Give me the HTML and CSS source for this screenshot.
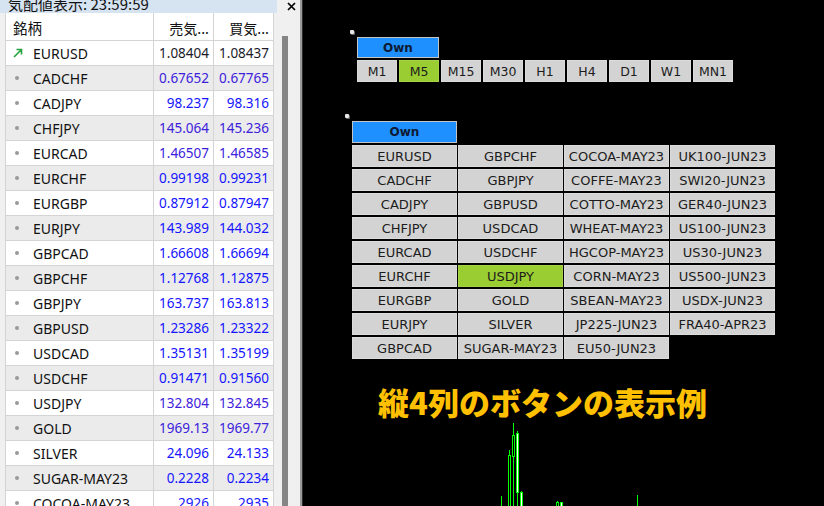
FILE: index.html
```html
<!DOCTYPE html>
<html lang="ja">
<head>
<meta charset="utf-8">
<link rel="stylesheet" href="styles.css">
</head>
<body>
<div class="screen">
  <div class="mw">
    <div class="mw-title">
      <div class="mw-caption">気配値表示: 23:59:59</div>
      <div class="mw-close"><svg width="9" height="9" viewBox="0 0 9 9"><path d="M1 1 L8 8 M8 1 L1 8" stroke="#000" stroke-width="1.7"/></svg></div>
    </div>
    <div class="mw-body">
      <div class="mw-table">
        <div class="row head"><div class="c name hname">銘柄</div><div class="c num hnum">売気...</div><div class="c num hnum">買気...</div></div>
        <div class="row sym"><div class="c name"><svg class="arrow" width="10" height="10" viewBox="0 0 10 10"><path d="M1 9 L8.3 1.7 M3.5 1.5 H8.5 V6.5" stroke="#23a33a" stroke-width="1.6" fill="none"/></svg>EURUSD</div><div class="c num dk">1.08404</div><div class="c num dk">1.08437</div></div>
        <div class="row sym"><div class="c name"><i class="dot"></i>CADCHF</div><div class="c num pu">0.67652</div><div class="c num pu">0.67765</div></div>
        <div class="row sym"><div class="c name"><i class="dot"></i>CADJPY</div><div class="c num bl">98.237</div><div class="c num bl">98.316</div></div>
        <div class="row sym"><div class="c name"><i class="dot"></i>CHFJPY</div><div class="c num pu">145.064</div><div class="c num pu">145.236</div></div>
        <div class="row sym"><div class="c name"><i class="dot"></i>EURCAD</div><div class="c num pu">1.46507</div><div class="c num pu">1.46585</div></div>
        <div class="row sym"><div class="c name"><i class="dot"></i>EURCHF</div><div class="c num bl">0.99198</div><div class="c num bl">0.99231</div></div>
        <div class="row sym"><div class="c name"><i class="dot"></i>EURGBP</div><div class="c num bl">0.87912</div><div class="c num bl">0.87947</div></div>
        <div class="row sym"><div class="c name"><i class="dot"></i>EURJPY</div><div class="c num bl">143.989</div><div class="c num bl">144.032</div></div>
        <div class="row sym"><div class="c name"><i class="dot"></i>GBPCAD</div><div class="c num bl">1.66608</div><div class="c num bl">1.66694</div></div>
        <div class="row sym"><div class="c name"><i class="dot"></i>GBPCHF</div><div class="c num bl">1.12768</div><div class="c num bl">1.12875</div></div>
        <div class="row sym"><div class="c name"><i class="dot"></i>GBPJPY</div><div class="c num bl">163.737</div><div class="c num bl">163.813</div></div>
        <div class="row sym"><div class="c name"><i class="dot"></i>GBPUSD</div><div class="c num bl">1.23286</div><div class="c num bl">1.23322</div></div>
        <div class="row sym"><div class="c name"><i class="dot"></i>USDCAD</div><div class="c num bl">1.35131</div><div class="c num bl">1.35199</div></div>
        <div class="row sym"><div class="c name"><i class="dot"></i>USDCHF</div><div class="c num bl">0.91471</div><div class="c num bl">0.91560</div></div>
        <div class="row sym"><div class="c name"><i class="dot"></i>USDJPY</div><div class="c num pu">132.804</div><div class="c num pu">132.845</div></div>
        <div class="row sym"><div class="c name"><i class="dot"></i>GOLD</div><div class="c num pu">1969.13</div><div class="c num pu">1969.77</div></div>
        <div class="row sym"><div class="c name"><i class="dot"></i>SILVER</div><div class="c num bl">24.096</div><div class="c num bl">24.133</div></div>
        <div class="row sym"><div class="c name"><i class="dot"></i>SUGAR-MAY23</div><div class="c num bl">0.2228</div><div class="c num bl">0.2234</div></div>
        <div class="row sym"><div class="c name"><i class="dot"></i>COCOA-MAY23</div><div class="c num bl">2926</div><div class="c num bl">2935</div></div>
      </div>
      <div class="scroll"><div class="thumb"></div></div>
    </div>
  </div>

  <div class="chart">
    <div class="tf-panel">
      <i class="anchor"></i>
      <div class="btn own own-tf">Own</div>
      <div class="tf-row">
        <div class="btn">M1</div>
        <div class="btn on">M5</div>
        <div class="btn">M15</div>
        <div class="btn">M30</div>
        <div class="btn">H1</div>
        <div class="btn">H4</div>
        <div class="btn">D1</div>
        <div class="btn">W1</div>
        <div class="btn">MN1</div>
      </div>
    </div>

    <div class="sym-panel">
      <i class="anchor"></i>
      <div class="btn own own-sym">Own</div>
      <div class="sym-grid">
        <div class="btn">EURUSD</div>
        <div class="btn">CADCHF</div>
        <div class="btn">CADJPY</div>
        <div class="btn">CHFJPY</div>
        <div class="btn">EURCAD</div>
        <div class="btn">EURCHF</div>
        <div class="btn">EURGBP</div>
        <div class="btn">EURJPY</div>
        <div class="btn">GBPCAD</div>
        <div class="btn">GBPCHF</div>
        <div class="btn">GBPJPY</div>
        <div class="btn">GBPUSD</div>
        <div class="btn">USDCAD</div>
        <div class="btn">USDCHF</div>
        <div class="btn on">USDJPY</div>
        <div class="btn">GOLD</div>
        <div class="btn">SILVER</div>
        <div class="btn">SUGAR-MAY23</div>
        <div class="btn">COCOA-MAY23</div>
        <div class="btn">COFFE-MAY23</div>
        <div class="btn">COTTO-MAY23</div>
        <div class="btn">WHEAT-MAY23</div>
        <div class="btn">HGCOP-MAY23</div>
        <div class="btn">CORN-MAY23</div>
        <div class="btn">SBEAN-MAY23</div>
        <div class="btn">JP225-JUN23</div>
        <div class="btn">EU50-JUN23</div>
        <div class="btn">UK100-JUN23</div>
        <div class="btn">SWI20-JUN23</div>
        <div class="btn">GER40-JUN23</div>
        <div class="btn">US100-JUN23</div>
        <div class="btn">US30-JUN23</div>
        <div class="btn">US500-JUN23</div>
        <div class="btn">USDX-JUN23</div>
        <div class="btn">FRA40-APR23</div>
      </div>
    </div>

    <div class="caption">縦4列のボタンの表示例</div>

    <svg class="candles" width="521" height="86" viewBox="0 0 521 86">
      <g stroke="#00ff00" stroke-width="1">
        <line x1="198.5" y1="76" x2="198.5" y2="86"/>
        <line x1="334.5" y1="75" x2="334.5" y2="86"/>
        <line x1="206.5" y1="30" x2="206.5" y2="36"/>
        <rect x="205.5" y="35.5" width="2" height="60" fill="#000"/>
        <line x1="210.5" y1="3" x2="210.5" y2="86"/>
        <rect x="209.5" y="15.5" width="2" height="21" fill="#000"/>
        <line x1="214.5" y1="11" x2="214.5" y2="86"/>
        <rect x="213.5" y="13.5" width="2" height="59" fill="#fff"/>
        <line x1="218.5" y1="71" x2="218.5" y2="86"/>
        <rect x="217.5" y="72.5" width="2" height="20" fill="#fff"/>
        <line x1="254.5" y1="81" x2="254.5" y2="86"/>
        <rect x="253.5" y="82.5" width="2" height="10" fill="#000"/>
        <rect x="257.5" y="82.5" width="2" height="10" fill="#fff"/>
      </g>
    </svg>
  </div>
</div>
</body>
</html>
```

FILE: styles.css
```css
* { box-sizing: border-box; margin: 0; padding: 0; }
html, body { width: 824px; height: 506px; overflow: hidden; background: #000; }

.screen { display: flex; width: 824px; height: 506px; }

/* Market watch panel */
.mw {
  width: 302px;
  flex: none;
  background: #f0f0f0;
  border-right: 2px solid #9b9b9b;
  display: flex;
  flex-direction: column;
  font-family: "Noto Sans", "Noto Sans CJK JP", sans-serif;
  color: #000;
}
.mw-title { display: flex; height: 13px; flex: none; }
.mw-caption {
  flex: 1;
  background: #d6e3f1;
  overflow: hidden;
  font-family: "Noto Sans CJK JP", sans-serif;
  font-size: 15px;
  line-height: 7px;
  padding-left: 8px;
  white-space: nowrap;
  color: #111;
}
.mw-close {
  width: 23px;
  display: flex;
  align-items: flex-start;
  justify-content: center;
  padding-top: 2px;
  padding-left: 5px;
}
.mw-body { flex: 1; display: flex; padding-left: 5px; overflow: hidden; }
.mw-table {
  width: 269px;
  flex: none;
  border-left: 1px solid #d4d4d4;
  background: #fff;
}
.row {
  display: grid;
  grid-template-columns: 148px 60px 60px;
  height: 25px;
  border-bottom: 1px solid #d4d4d4;
  background: #fff;
}
.row.sym:nth-child(odd) { background: #ebebeb; }
.row.head { height: 28px; }
.c {
  border-right: 1px solid #d4d4d4;
  display: flex;
  align-items: center;
  white-space: nowrap;
  overflow: hidden;
  font-size: 14px;
}
.name { color: #111; }
.hname { padding-left: 7px; font-family: "Noto Sans CJK JP", sans-serif; font-size: 14.5px; padding-top: 2px; }
.num { justify-content: flex-end; padding-right: 4px; font-size: 13.5px; }
.hnum { font-family: "Noto Sans CJK JP", sans-serif; font-size: 14px; color: #111; padding-top: 2px; }
.dot {
  width: 4px; height: 4px;
  border-radius: 50%;
  background: #9a9a9a;
  margin: 0 14px 0 9px;
  flex: none;
}
.arrow { margin: 0 10px 0 7px; flex: none; }
.dk { color: #1a1a2a; }
.bl { color: #1515ff; }
.pu { color: #3d22dc; }

.scroll { flex: 1; display: flex; flex-direction: column; padding: 23px 0 0 8px; }
.thumb { width: 6px; flex: 1; background: #858585; }

/* Chart */
.chart {
  flex: 1;
  position: relative;
  background: #000;
  border-left: 1px solid #2c2c2c;
  display: flex;
  flex-direction: column;
  align-items: flex-start;
}
.anchor {
  position: absolute;
  left: -7px; top: -7px;
  width: 4px; height: 4px;
  background: #e6e6e6;
  border-radius: 1px;
  box-shadow: 1px 1px 0 #666;
}
.btn {
  display: flex;
  align-items: center;
  justify-content: center;
  background: #d3d3d3;
  border: 1px solid #dcdcdc;
  color: #1c1c1c;
  font-family: "DejaVu Sans", Verdana, sans-serif;
  font-size: 12.5px;
  white-space: nowrap;
}
.btn.on { background: #9acd32; border-color: #a6d24a; }
.own {
  background: #1e90ff;
  border: 1px solid #c4c4c4;
  font-weight: bold;
  font-size: 12px;
  color: #0e1a33;
}

.tf-panel { position: relative; margin: 37px 0 0 54px; }
.own-tf { width: 82px; height: 21px; }
.tf-row { display: flex; gap: 2px; margin-top: 2px; }
.tf-row .btn { width: 40px; height: 22px; }

.sym-panel { position: relative; margin: 39px 0 0 49px; }
.own-sym { width: 105px; height: 22px; }
.sym-grid {
  display: grid;
  grid-template-rows: repeat(9, 22px);
  grid-auto-flow: column;
  grid-auto-columns: 105px;
  column-gap: 1px;
  row-gap: 2px;
  margin-top: 2px;
}
.sym-grid .btn { font-size: 13px; }

.caption {
  margin: 27px 0 0 75px;
  font-family: "Noto Sans CJK JP", sans-serif;
  font-weight: 900;
  font-size: 31px;
  line-height: 32px;
  color: #ffc000;
  white-space: nowrap;
}

.candles { position: absolute; left: 0; bottom: 0; }
```
